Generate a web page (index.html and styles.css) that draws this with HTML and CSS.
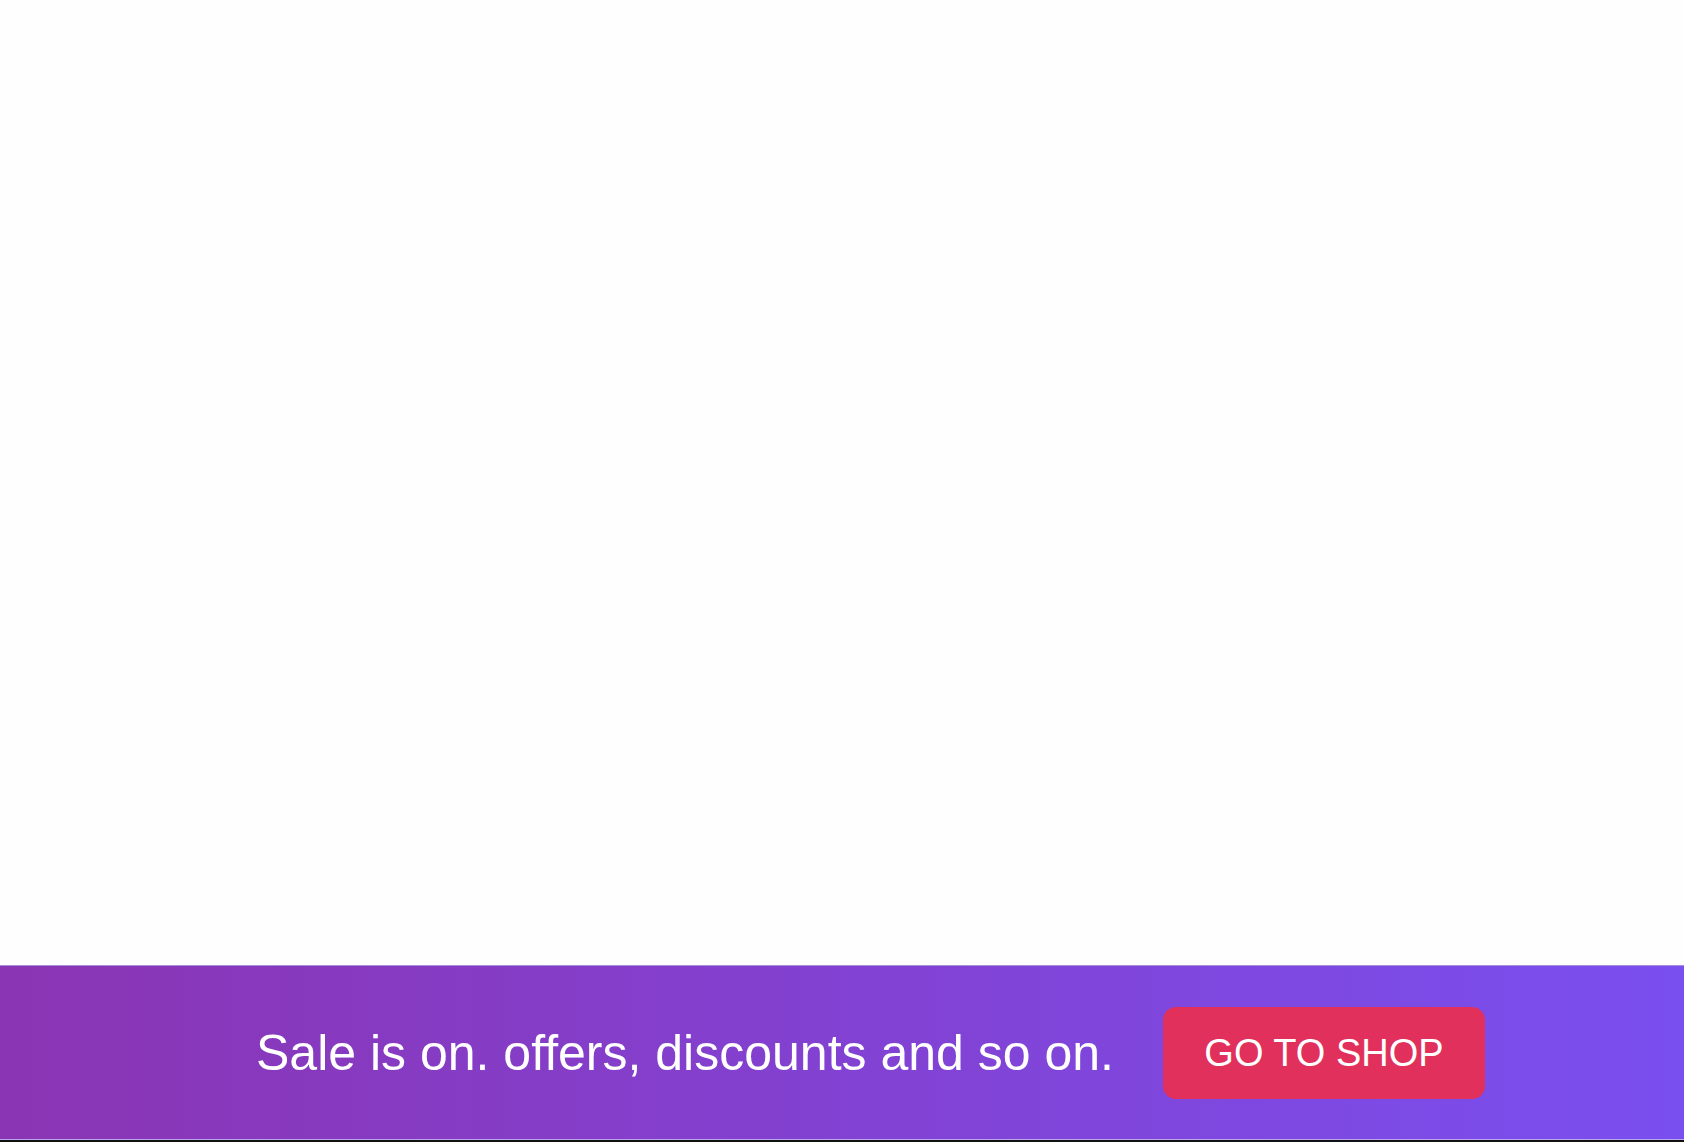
FILE: index.html
```html
<!DOCTYPE html>
<html lang="en">
<head>
    <meta charset="UTF-8">
    <meta name="viewport" content="width=device-width, initial-scale=1.0">
    <title>Sale banner</title>
    <link rel="stylesheet" href="styles.css">
</head>
<body>
    <main class="page"></main>

    <!-- Banner de oferta -->
    <section class="sale-banner">
        <p class="sale-text">Sale is on. offers, discounts and so on.</p>
        <a class="shop-btn" href="#">GO TO SHOP</a>
    </section>
    <div class="bottom-edge"></div>
</body>
</html>
```

FILE: styles.css
```css
* {
    box-sizing: border-box;
    margin: 0;
    padding: 0;
}

body {
    font-family: "Liberation Sans", Arial, sans-serif;
    background-color: #fefefe;
    height: 100vh;
    display: flex;
    flex-direction: column;
    overflow: hidden;
}

.page {
    flex: 1;
}

.sale-banner {
    height: 175px;
    display: flex;
    align-items: center;
    padding-left: 256px;
    background: linear-gradient(90deg, #8a35b3 0%, #8340cf 45%, #7a4fef 100%);
    border-top: 1px solid #a68fd6;
    border-bottom: 1px solid #b9a6ee;
}

.sale-text {
    color: #fff;
    font-size: 50px;
    white-space: nowrap;
    width: 907px;
    flex-shrink: 0;
}

.shop-btn {
    display: inline-block;
    width: 322px;
    height: 92px;
    line-height: 92px;
    text-align: center;
    background-color: #e0305b;
    border-radius: 13px;
    color: #fff;
    text-decoration: none;
    font-size: 38px;
}

.bottom-edge {
    height: 2px;
    background-color: #111;
}
```
